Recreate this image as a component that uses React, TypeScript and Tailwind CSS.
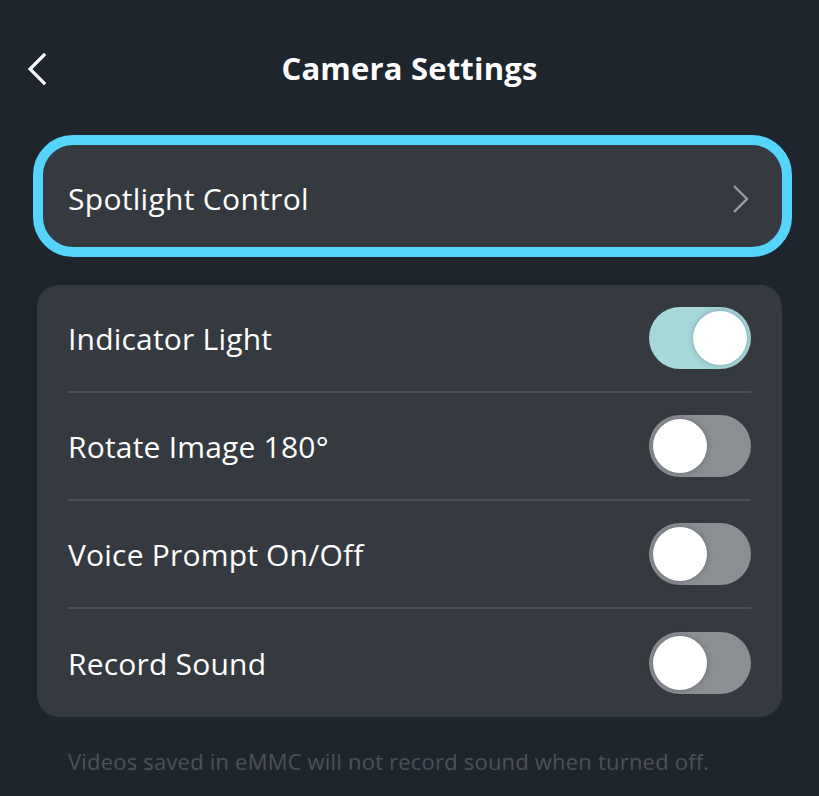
import React, { useState } from 'react'

const rows = [
    { label: 'Indicator Light', on: true },
    { label: 'Rotate Image 180°', on: false },
    { label: 'Voice Prompt On/Off', on: false },
    { label: 'Record Sound', on: false },
]

function Toggle({ on, onClick }: { on: boolean, onClick: () => void }) {
    return (
        <button
            onClick={onClick}
            className={`relative w-[102px] h-[62px] rounded-full shrink-0 flex items-center px-[4px] ${on ? 'bg-[#a7d8dc] justify-end' : 'bg-[#8b8f94] justify-start'}`}
        >
            <span className="w-[54px] h-[54px] rounded-full bg-white shadow-[0_0_6px_rgba(0,0,0,0.25)]" />
        </button>
    )
}

export default function App() {
    const [state, setState] = useState(rows.map((r) => r.on))

    return (
        <div className="w-full min-h-[796px] bg-[#1f252d] text-white" style={{ fontFamily: '"Open Sans", "Noto Sans", sans-serif' }}>
            <header className="relative h-[136px] flex items-center justify-center">
                <button className="absolute left-[26px] top-[52px]">
                    <svg width="22" height="34" viewBox="0 0 22 34" fill="none">
                        <path d="M18 3 L4 17 L18 31" stroke="white" strokeWidth="3.2" strokeLinecap="square" />
                    </svg>
                </button>
                <h1 className="text-[31px] font-bold tracking-[0.2px]">Camera Settings</h1>
            </header>

            <div className="mx-[37px] mt-[9px] relative">
                <div className="h-[102px] rounded-[22px] bg-[#353a41] flex items-center justify-between pl-[31px] pr-[32px]">
                    <span className="text-[30px] tracking-[0.3px] pt-[4px]">Spotlight Control</span>
                    <svg width="18" height="28" viewBox="0 0 18 28" fill="none" className="mt-[6px]">
                        <path d="M2 1 L15 14 L2 27" stroke="#9a9da1" strokeWidth="2.4" />
                    </svg>
                </div>
                <div className="absolute -left-[4px] -right-[10px] -top-[10px] -bottom-[10px] rounded-[40px] border-[10px] border-[#55d5fc] pointer-events-none" />
            </div>

            <div className="mx-[37px] mt-[38px] rounded-[22px] bg-[#353a41] px-[31px]">
                {rows.map((r, i) => (
                    <div
                        key={r.label}
                        className={`h-[108px] flex items-center justify-between ${i < rows.length - 1 ? 'border-b-2 border-[#4a4f56]' : ''}`}
                    >
                        <span className="text-[30px] tracking-[0.2px]">{r.label}</span>
                        <Toggle
                            on={state[i]}
                            onClick={() => setState(state.map((s, j) => (j === i ? !s : s)))}
                        />
                    </div>
                ))}
            </div>

            <p className="mt-[29px] px-[68px] text-[22px] tracking-[0.2px] leading-[30px] text-[#4b5159]">
                Videos saved in eMMC will not record sound when turned off.
            </p>
        </div>
    )
}
